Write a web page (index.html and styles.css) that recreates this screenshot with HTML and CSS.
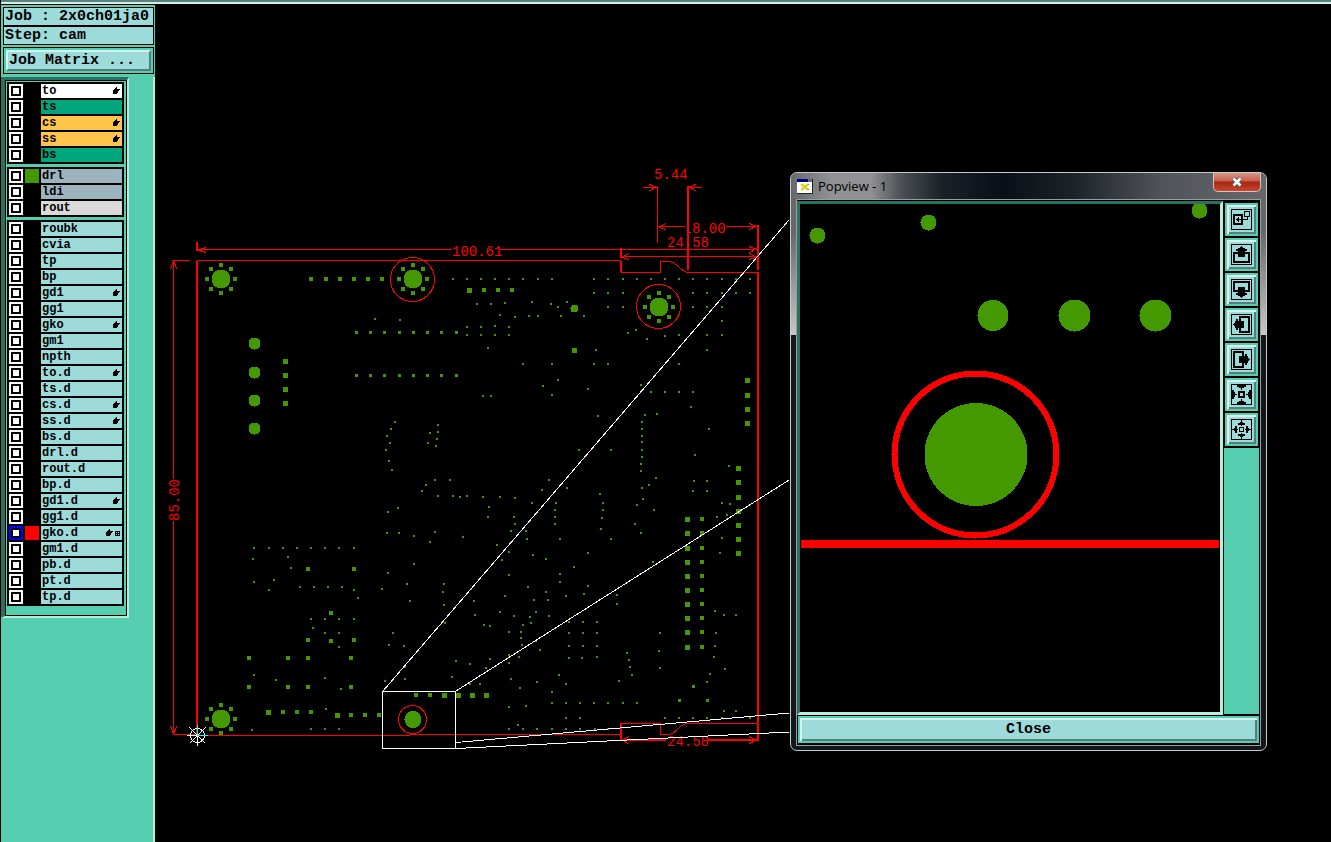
FILE: index.html
```html
<!DOCTYPE html>
<html lang="en">
<head>
  <meta charset="UTF-8">
  <meta name="viewport" content="width=device-width, initial-scale=1.0">
  <title>2x0ch01ja0 - cam</title>
  <link rel="stylesheet" href="styles.css">
</head>
<body>
  <!-- shared icons -->
  <svg class="defs" width="0" height="0">
    <symbol id="hand" viewBox="0 0 8 8">
      <path d="M4 0H5V2H8V3H7V4H6V6H5V7H1V3H2V2H3V1H4z"/>
    </symbol>
    <symbol id="grid" viewBox="0 0 5 5">
      <path fill-rule="evenodd" d="M0 0h5v5h-5zM1 1v1h1v-1zM3 1v1h1v-1zM1 3v1h1v-1zM3 3v1h1v-1z"/>
    </symbol>
    <symbol id="move" viewBox="0 0 21 21">
      <path fill="none" stroke="#000" stroke-width="2" d="M7 9H3V18H18V9H14"/>
      <path d="M10 2h1v1h1v1h2v1h2v2h-2v6h-7v-6h-2v-2h2v-1h2v-1h1z"/>
    </symbol>
    <symbol id="wedge" viewBox="0 0 21 21">
      <path d="M6 1h9v2h-2v1h-2v2h-1v-2h-2v-1h-2z"/>
    </symbol>
    <symbol id="tip" viewBox="0 0 21 21">
      <path d="M10 1h1v2h1v1h2v2h-3v1h-1v-1h-3v-2h2v-1h1z"/>
    </symbol>
  </svg>

  <div class="strip"></div>
  <div class="app">
    <aside class="sidebar">
      <div class="head">
        <div class="info">
          <div>Job : 2x0ch01ja0</div>
          <div>Step: cam</div>
        </div>
        <div class="frame">
          <button class="matrix" type="button">Job Matrix ...</button>
        </div>
      </div>
      <div class="side-body">
        <div class="panel">
          <div class="layers" id="layers"></div>
        </div>
      </div>
    </aside>

    <main class="canvas">
      <svg class="board" width="100%" height="100%">
        <g transform="translate(-155 -4)">
          <g id="drills" class="drill"></g>

          <!-- board outline -->
          <path class="thick" d="M197 261V736M621 248V258M621 261V272M758 272V723M758 724V741M621 723V741M758 225V270M688 186V270M197 242V251"/>
          <path class="thin" d="M197 260.500H621M621 272.500H661M660.500 272V261.500H669Q674 262 679 267T688 272.500H758"/>
          <path class="thin" d="M197 735.500H410M173 734.500H200M410 734.500H621M621 723.500H660.500V734.500H670Q674 733 679 728T688 723.500H758"/>
          <circle class="thin" cx="412.500" cy="279.500" r="22"/>
          <circle class="thin" cx="658.500" cy="306.500" r="22"/>
          <circle class="thin" cx="412.500" cy="719.500" r="14"/>

          <!-- dimensions -->
          <path class="thin" d="M197 249.500H452M500 249.500H757M621 256.500H757M173.500 260V479M173.500 521V735M172 260.500H190"/>
          <path class="thin" d="M643 187.500H657M688 187.500H702M657.500 186V243M658 226.500H685M726 226.500H757M688 232.500H691"/>
          <path class="thick" d="M621 740H666M708 740H758"/>
          <path class="thin" d="M206 247.500L198.500 250L206 252.500M170.500 269L173.500 261L177 269M170.500 726L173.500 734L177 726"/>
          <path class="thin" d="M649 184.500L656 187L649 191M696 184.500L689 187L696 191M666 223.500L659 227L666 230M749 223.500L756 226L749 230"/>
          <path class="thin" d="M629 253.500L622 257L629 260M749 246.500L756 249L749 253M749 253.500L756 257L749 260M629 736.500L622 740L629 744M749 736.500L756 740L749 744"/>
          <g class="dim">
            <text x="452" y="256">100.61</text>
            <text x="654" y="179">5.44</text>
            <text x="692" y="233">8.00</text>
            <text x="667" y="247">24.58</text>
            <text x="667" y="746">24.58</text>
            <text transform="translate(179 521) rotate(-90)">85.00</text>
          </g>

          <!-- zoomed area and its projection lines -->
          <rect class="zoom" x="382.500" y="691.500" width="73" height="57"/>
          <path class="zoom" d="M383 691L789 220M456 691L789 480M456 742.500L789 713M456 748.500L789 732"/>

          <!-- origin marker -->
          <circle class="zoom" cx="197.500" cy="735.500" r="7"/>
          <path class="zoom" d="M187 735.500H208M197.500 725V746M189.500 727.500L205.500 743.500M205.500 727.500L189.500 743.500"/>
          <path class="cyan" d="M197.500 725V735.500H208"/>
        </g>
      </svg>

      <section class="window" aria-label="Popview - 1">
        <header class="title">
          <svg class="logo" width="16" height="15" viewBox="0 0 16 15">
            <path fill="#fff" d="M0 0h15v14h-15z"/>
            <path fill="#000080" d="M0 0h11v3h-11z"/>
            <path fill="#667" d="M11 0h4v3h-4z"/>
            <path fill="#222" d="M0 14h16v1h-16zM15 0h1v15h-1z"/>
            <path stroke="#555" fill="none" d="M5 5l7 6M12 5l-7 6"/>
            <path stroke="#e0d800" stroke-width="2" fill="none" d="M4 5l7 6M11 5l-7 6"/>
          </svg>
          <span class="caption">Popview - 1</span>
          <button class="x" type="button" aria-label="Close window">
            <svg width="12" height="10" viewBox="0 0 12 10">
              <path stroke="#555" stroke-width="4" d="M2.500 1.500l7 7M9.500 1.500l-7 7"/>
              <path stroke="#fff" stroke-width="2.500" d="M2.500 1.500l7 7M9.500 1.500l-7 7"/>
            </svg>
          </button>
        </header>
        <div class="client">
          <div class="work">
            <svg class="view">
              <g class="drill">
                <circle cx="17.500" cy="31.500" r="8"/>
                <circle cx="128.500" cy="18.500" r="8"/>
                <circle cx="399.500" cy="6.500" r="8"/>
                <circle cx="193" cy="111.500" r="15.500"/>
                <circle cx="274.500" cy="111.500" r="16"/>
                <circle cx="355.500" cy="111.500" r="16"/>
                <circle cx="176" cy="250.500" r="51.500"/>
              </g>
              <circle class="ring" cx="175.500" cy="250.500" r="81"/>
              <rect class="bar" x="1" y="336" width="418" height="8"/>
            </svg>
            <div class="tools">
              <button class="tool" type="button" aria-label="Popup view">
                <svg viewBox="0 0 21 21">
                  <path class="line" d="M.5 .5h20v20h-20zM13.500 2.500h5v5h-5zM12 10.500h4.500v-3M5 10.500h5M7.500 8v5M6.500 9v3"/>
                  <path class="line bold" d="M3 6h8v9h-8z"/>
                </svg>
              </button>
              <button class="tool" type="button" aria-label="Pan up">
                <svg viewBox="0 0 21 21"><path class="line" d="M.5 .5h20v20h-20z"/><use href="#move"/></svg>
              </button>
              <button class="tool" type="button" aria-label="Pan down">
                <svg viewBox="0 0 21 21"><path class="line" d="M.5 .5h20v20h-20z"/><use href="#move" transform="rotate(180 10.500 10.500)"/></svg>
              </button>
              <button class="tool" type="button" aria-label="Pan left">
                <svg viewBox="0 0 21 21"><path class="line" d="M.5 .5h20v20h-20z"/><use href="#move" transform="rotate(-90 10.500 10.500)"/></svg>
              </button>
              <button class="tool" type="button" aria-label="Pan right">
                <svg viewBox="0 0 21 21"><path class="line" d="M.5 .5h20v20h-20z"/><use href="#move" transform="rotate(90 10.500 10.500)"/></svg>
              </button>
              <button class="tool" type="button" aria-label="Zoom out">
                <svg viewBox="0 0 21 21">
                  <path class="line" d="M.5 .5h20v20h-20z"/>
                  <path class="line bold" d="M8 8h5v5h-5z"/>
                  <use href="#wedge"/>
                  <use href="#wedge" transform="rotate(90 10.500 10.500)"/>
                  <use href="#wedge" transform="rotate(180 10.500 10.500)"/>
                  <use href="#wedge" transform="rotate(270 10.500 10.500)"/>
                </svg>
              </button>
              <button class="tool" type="button" aria-label="Zoom in">
                <svg viewBox="0 0 21 21">
                  <path class="line" d="M.5 .5h20v20h-20zM8.500 8.500h4v4h-4z"/>
                  <use href="#tip"/>
                  <use href="#tip" transform="rotate(90 10.500 10.500)"/>
                  <use href="#tip" transform="rotate(180 10.500 10.500)"/>
                  <use href="#tip" transform="rotate(270 10.500 10.500)"/>
                </svg>
              </button>
              <div class="filler"></div>
            </div>
          </div>
          <button class="close" type="button">Close</button>
        </div>
      </section>
    </main>
  </div>
  <script src="script.js"></script>
</body>
</html>
```
FILE: styles.css
```css
* {
  box-sizing: border-box;
}

body, html {
  margin: 0;
  padding: 0;
  height: 100%;
  background: #000;
  overflow: hidden;
}

body {
  display: flex;
  flex-direction: column;
  font-family: "Liberation Mono", "Courier New", monospace;
  font-weight: bold;
  font-size: 15px;
  color: #000;
}

button {
  margin: 0;
  padding: 0;
  font: inherit;
  color: inherit;
}

.defs {
  position: absolute;
}

.strip {
  height: 4px;
  margin-left: 1px;
  background: #5a8080;
  border-bottom: 2px solid #d4eeee;
}

.app {
  flex: 1;
  display: flex;
  min-height: 0;
}

/* Sidebar */
.sidebar {
  width: 155px;
  flex: none;
  display: flex;
  flex-direction: column;
  border-left: 1px solid #000;
  border-top: 1px solid #000;
  background: #55ceb0;
}

.head {
  display: flex;
  flex-direction: column;
  gap: 2px;
  padding: 2px 1px 2px 2px;
}

.info {
  display: flex;
  flex-direction: column;
  gap: 2px;
  background: #000;
  border: 1px solid #000;
}

.info div {
  height: 17px;
  line-height: 18px;
  padding-left: 1px;
  background: #9ddbdb;
  white-space: nowrap;
  overflow: hidden;
}

.frame {
  border: 1px solid #000;
  padding: 2px;
}

.matrix {
  display: block;
  width: 100%;
  height: 21px;
  padding-left: 1px;
  line-height: 18px;
  text-align: left;
  background: #9ddbdb;
  border: 2px solid;
  border-color: #d4f2f2 #537f7f #537f7f #d4f2f2;
}

.side-body {
  flex: 1;
  margin-top: 1px;
  border-right: 2px solid #b0efd9;
}

.panel {
  width: 128px;
  border-style: solid;
  border-width: 3px 2px 2px 4px;
  border-color: #2d6f60 #b4eedd #b4eedd #2d6f60;
}

.layers {
  display: flex;
  flex-direction: column;
  gap: 3px;
  padding: 1px 2px 9px 1px;
  border: 1px solid #000;
}

.group {
  display: flex;
  flex-direction: column;
  gap: 2px;
  padding: 2px;
  background: #000;
}

.row {
  display: flex;
  gap: 2px;
  height: 14px;
}

.row input {
  appearance: none;
  width: 14px;
  height: 14px;
  margin: 0;
  background: #fff;
  border: 2px solid #fff;
  box-shadow: inset 0 0 0 2px #000;
}

.row input:checked {
  border-color: #00f;
}

.swatch {
  width: 14px;
}

.swatch.green {
  background: #449900;
}

.swatch.red {
  background: #f00;
}

.row label {
  flex: 1;
  display: flex;
  align-items: center;
  gap: 2px;
  padding: 0 2px 0 1px;
  font-size: 12px;
  line-height: 14px;
  background: #9ddbdb;
}

.row label span {
  flex: 1;
}

.row label.white {
  background: #fff;
}

.row label.mask {
  background: #00a67c;
}

.row label.signal {
  background: #ffc54b;
}

.row label.gray {
  background: #9cb4be;
}

.row label.pale {
  background: #dadada;
}

.hand {
  width: 8px;
  height: 8px;
  shape-rendering: crispEdges;
}

.grid {
  width: 5px;
  height: 5px;
}

/* Board */
.canvas {
  flex: 1;
  position: relative;
  min-width: 0;
  background: #000;
}

.board {
  display: block;
  shape-rendering: crispEdges;
}

.drill {
  fill: #449900;
}

.thin, .thick {
  fill: none;
  stroke: #f00;
}

.thick {
  stroke-width: 2;
}

.dim {
  fill: #f00;
  font-size: 14px;
  font-weight: normal;
}

.zoom {
  fill: none;
  stroke: #fff;
}

.cyan {
  fill: none;
  stroke: #0ff;
}

/* Popview window */
.window {
  position: absolute;
  left: 635px;
  top: 168px;
  padding: 0 5px 4px;
  border: 1px solid #c4cacd;
  border-radius: 7px;
  background: linear-gradient(#66696c 0, #66696c 60px, #c8c8c8 162px, #10171d 162px);
}

.title {
  display: flex;
  align-items: flex-start;
  height: 26px;
  margin: 0 -5px;
  padding: 0 5px;
  border-radius: 6px 6px 0 0;
  background: linear-gradient(90deg, #66696c 0, #8f9194 40px, #8f9194 80px, #4c5055 110px, #1b2127 150px, #090f17 210px, #1c2126 280px, #50545a 370px, #66696c 100%);
}

.logo {
  margin: 6px 5px 0 1px;
}

.caption {
  flex: 1;
  font-family: "Open Sans", "Noto Sans", sans-serif;
  font-weight: normal;
  font-size: 13px;
  line-height: 26px;
}

.x {
  display: flex;
  align-items: center;
  justify-content: center;
  width: 48px;
  height: 19px;
  border: 1px solid #d5c3bf;
  border-top: 0;
  border-radius: 0 0 5px 5px;
  background: linear-gradient(#d99585 0, #c4604c 8px, #a52512 9px, #c6472d 100%);
}

.client {
  padding: 1px 0 2px;
  border: 1px solid #999da0;
  background: #000;
}

.work {
  display: flex;
  gap: 1px;
}

.view {
  width: 426px;
  height: 514px;
  border: 3px solid;
  border-color: #2d6f60 #b4eedd #b4eedd #2d6f60;
  shape-rendering: crispEdges;
}

.ring {
  fill: none;
  stroke: #f00;
  stroke-width: 6;
}

.bar {
  fill: #f00;
}

.tools {
  width: 36px;
  display: flex;
  flex-direction: column;
  gap: 2px;
  padding: 2px 1px 1px 0;
}

.tool {
  width: 33px;
  height: 33px;
  margin-left: 1px;
  padding: 4px;
  background: #9ddbdb;
  border: 2px solid #55ceb0;
  box-shadow: inset 2px 2px #d4f2f2, inset -2px -2px #537f7f;
}

.tool svg {
  display: block;
  width: 21px;
  height: 21px;
  shape-rendering: crispEdges;
}

.line {
  fill: none;
  stroke: #000;
}

.line.bold {
  stroke-width: 2;
}

.filler {
  flex: 1;
  background: #55ceb0;
}

.close {
  display: block;
  width: calc(100% - 2px);
  height: 27px;
  margin: 1px 1px 0;
  background: #9ddbdb;
  border: 2px solid #55ceb0;
  box-shadow: inset 2px 2px #d4f2f2, inset -2px -2px #537f7f;
}
```
FILE: script.js
```js
// name, label class, icons, swatch colour
const groups = [
  [
    ['to', 'white', 'hand'], ['ts', 'mask'], ['cs', 'signal', 'hand'],
    ['ss', 'signal', 'hand'], ['bs', 'mask']
  ],
  [['drl', 'gray', '', 'green'], ['ldi', 'gray'], ['rout', 'pale']],
  [
    ['roubk'], ['cvia'], ['tp'], ['bp'], ['gd1', '', 'hand'], ['gg1'],
    ['gko', '', 'hand'], ['gm1'], ['npth'], ['to.d', '', 'hand'], ['ts.d'],
    ['cs.d', '', 'hand'], ['ss.d', '', 'hand'], ['bs.d'], ['drl.d'],
    ['rout.d'], ['bp.d'], ['gd1.d', '', 'hand'], ['gg1.d'],
    ['gko.d', '', 'hand grid', 'red'], ['gm1.d'], ['pb.d'], ['pt.d'], ['tp.d']
  ]
];

document.getElementById('layers').innerHTML = groups.map(rows =>
  '<div class="group">' + rows.map(([name, cls = '', icons = '', color = '']) => {
    const svg = icons.split(' ').filter(Boolean)
      .map(i => `<svg class="${i}"><use href="#${i}"/></svg>`).join('');
    return `<div class="row"><input type="checkbox" id="l-${name}" ${color === 'red' ? 'checked' : ''}>` +
      `<div class="swatch ${color}"></div><label class="${cls}" for="l-${name}"><span>${name}</span>${svg}</label></div>`;
  }).join('') + '</div>'
).join('');

// vias, one line per row of the board: y: x x x
const vias = `
279: 453 467 481 495 509 523 538 552 594 608 623 637 651 665 679 693 707 722 736 750
293: 594 608 623 693 707 722 736 750
302: 532 567
303: 505
304: 477 491 551
307: 558 608 623 693 707 722
315: 500
316: 529 538 561 584
317: 515
319: 375
320: 400
321: 722
326: 495
327: 467 481 509
330: 636
333: 628
335: 467 481 495 509 679 707 722
336: 665
339: 647
348: 488
350: 596 707
364: 523 552 594 608 679
380: 558
385: 641
386: 543
389: 588
392: 651 665 679 693
395: 552
396: 483 491
407: 691
414: 657
415: 645
416: 598
422: 395 642
425: 438
429: 391 642 709
432: 438
433: 430
436: 387 642
439: 437
442: 642
443: 390 428
446: 436
450: 386 579 611 642
455: 695
457: 642
461: 389
464: 641
466: 729
470: 392
471: 641
478: 656
480: 435 450 549
481: 694 707
485: 426 649
488: 567 642
490: 542
491: 422 693 707
494: 600
496: 438 453 467
497: 460 483 500
498: 515
499: 643
503: 532 556 603 722
504: 730
505: 637
507: 489
508: 398
510: 555 603 654
512: 388
515: 727
517: 488 514 555 717
518: 602
524: 515 555 635
529: 601
531: 511 526
532: 435
533: 387 399 641
536: 414
537: 463
538: 722
539: 527 560 611
542: 430
545: 497
548: 254 269 283 297 311 325 339 354
552: 509
553: 588 720
555: 533
557: 288
559: 253 546
560: 502
562: 653
564: 414
567: 574
568: 291
573: 388
574: 560
575: 509
580: 274
582: 254 560
584: 407 444
586: 588
587: 300 314 328 342 528
589: 382 471
590: 269 354
592: 443 546
594: 584
595: 617
596: 505 566
598: 358
600: 534 548
601: 410 474
604: 617
605: 444
611: 715
612: 500 536
615: 475 724 736
616: 514 549
617: 530
619: 311 325 339 354
622: 569 583 597
623: 445 531
625: 484 523
626: 490
628: 313
632: 509 521
633: 325 339 393 569 583 597 660 716
638: 521
641: 536
645: 389 522
646: 404 569 583 597 715
647: 339
650: 540
651: 659
653: 627
655: 509
657: 519 597 714
658: 569 582
659: 490
660: 629
661: 456
663: 509
664: 470
667: 405 630
668: 486 660
669: 725
674: 710
675: 254 559 632
677: 452
678: 325
679: 405 511
680: 276
681: 385 619
682: 537 707
684: 470 480 566
688: 520
689: 341
692: 552
703: 552 566 580 594 608 623 637
706: 526
707: 509
709: 326
711: 724 736
718: 566 580 665 679 693 707 722 750
725: 518
729: 311 325 339 509 523 537 552 566 580 595 608
730: 252`;

const pins3 = `
332: 356 370 384 399 413 427 441 456
375: 356 370 384 399 413 427 441 456
686: 693
700: 679 707`;

const pads4 = `
279: 311 326 340 354 368 382
290: 484 498 512
519: 702
533: 702
548: 702
562: 702
576: 702
590: 702
604: 702
618: 702
632: 702
647: 702
569: 308 354
613: 331
640: 308 354
641: 331
658: 249 288 308 351
687: 249 288 308 351
695: 416 430
712: 283 297 311
715: 351 365 379`;

const pads5 = `
290: 469
350: 574
361: 285
375: 285
389: 285
403: 285
380: 747
395: 747
409: 747
423: 747
468: 738
482: 738
497: 738
511: 738
525: 738
539: 738
553: 738
519: 687
533: 687
548: 687
562: 687
576: 687
590: 687
604: 687
618: 687
632: 687
647: 687
695: 444 458 472 486
712: 268
715: 337`;

// square hits of the given size, centred on each point
function squares(list, size) {
  const o = Math.floor(size / 2);
  let d = '';
  list.trim().split('\n').forEach(line => {
    const [y, xs] = line.split(': ');
    xs.split(' ').forEach(x => {
      d += `M${x - o} ${y - o}h${size}v${size}h-${size}z`;
    });
  });
  return `<path d="${d}"/>`;
}

const holes = [
  [254.5, 343.5, 6], [254.5, 372.5, 6], [254.5, 400.5, 6], [254.5, 428.5, 6],
  [574.5, 308.5, 4], [413, 719.5, 8.5]
];

// mounting holes with a ring of eight pads
const mounts = [[221, 279], [413, 279], [659, 307], [221, 719]];
let ring = '';
mounts.forEach(([x, y]) => {
  holes.push([x, y, 9.5]);
  [[0, -14], [10, -10], [14, 0], [10, 10], [0, 14], [-10, 10], [-14, 0], [-10, -10]]
    .forEach(([dx, dy]) => {
      ring += `\n${y + dy}: ${x + dx}`;
    });
});

document.getElementById('drills').innerHTML =
  squares(vias, 2) + squares(pins3, 3) + squares(pads4, 4) + squares(pads5, 5) + squares(ring, 4) +
  holes.map(([x, y, r]) => `<circle cx="${x}" cy="${y}" r="${r}"/>`).join('');
```
